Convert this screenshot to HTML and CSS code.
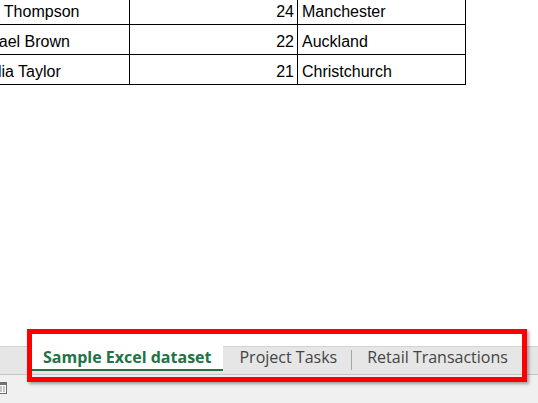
FILE: index.html
```html
<!DOCTYPE html>
<html lang="en">
<head>
    <meta charset="UTF-8">
    <meta name="viewport" content="width=device-width, initial-scale=1.0">
    <title>Sample Excel dataset</title>
    <link rel="stylesheet" href="styles.css">
</head>
<body>
    <div class="sheet">
        <div class="grid">
            <div class="row">
                <div class="cell name">Liam Thompson</div>
                <div class="cell num">24</div>
                <div class="cell">Manchester</div>
            </div>
            <div class="row">
                <div class="cell name">Michael Brown</div>
                <div class="cell num">22</div>
                <div class="cell">Auckland</div>
            </div>
            <div class="row">
                <div class="cell name">Amelia Taylor</div>
                <div class="cell num">21</div>
                <div class="cell">Christchurch</div>
            </div>
        </div>
    </div>

    <div class="tabbar">
        <div class="tab active">Sample Excel dataset</div>
        <div class="tab first">Project Tasks</div>
        <span class="sep"></span>
        <div class="tab">Retail Transactions</div>
    </div>

    <div class="statusbar">
        <svg class="view-icon" width="12" height="12" viewBox="0 0 12 12">
            <rect x="0.5" y="0.5" width="11" height="11" fill="#fff" stroke="#6f6f6f"/>
            <rect x="1" y="1" width="10" height="2" fill="#6f6f6f"/>
            <path d="M2 5h8M2 7h8M2 9h8" stroke="#8a8a8a" stroke-dasharray="2 1"/>
        </svg>
    </div>

    <div class="highlight"></div>
</body>
</html>
```

FILE: styles.css
```css
body {
    margin: 0;
    width: 538px;
    height: 403px;
    overflow: hidden;
    display: flex;
    flex-direction: column;
    background: #fff;
    position: relative;
}

.sheet {
    flex: 1;
    overflow: hidden;
    background: #fff;
}

.grid {
    width: 505px;
    margin-top: -5px;
    margin-left: -39px;
    font-family: "Liberation Sans", Arial, sans-serif;
    font-size: 16px;
    color: #000;
}

.row {
    display: grid;
    grid-template-columns: 169px 168px 168px;
    height: 30px;
    box-sizing: border-box;
    border-bottom: 1px solid #000;
}

.cell {
    box-sizing: border-box;
    border-right: 1px solid #000;
    display: flex;
    align-items: flex-end;
    line-height: 20px;
    padding: 0 3px 2px 4px;
    white-space: nowrap;
    overflow: hidden;
}

.cell.num {
    justify-content: flex-end;
}

.tabbar {
    height: 29px;
    box-sizing: border-box;
    background: #e6e6e6;
    border-top: 1px solid #d2d2d2;
    border-bottom: 1px solid #c6c6c6;
    display: flex;
    align-items: flex-start;
    padding-left: 31px;
    font-family: "Open Sans", "Noto Sans", sans-serif;
    font-size: 16px;
    color: #444;
}

.tab {
    line-height: 20px;
    padding: 0 15px;
    white-space: nowrap;
}

.tab.first {
    padding: 0 14px 0 16px;
}

.tab.active {
    margin-top: -1px;
    padding: 1px 12px 2px;
    background: #fff;
    border-bottom: 2px solid #217346;
    color: #217346;
    font-weight: bold;
}

.sep {
    width: 1px;
    height: 20px;
    margin-top: 3px;
    background: #a6a6a6;
}

.statusbar {
    height: 28px;
    background: #f0f0f0;
    display: flex;
    align-items: flex-start;
}

.view-icon {
    margin: 7px 0 0 -5px;
}

.highlight {
    position: absolute;
    left: 27px;
    top: 329px;
    width: 500px;
    height: 53px;
    box-sizing: border-box;
    border: 5px solid #ff0000;
    box-shadow: 2px 2px 3px rgba(0, 0, 0, 0.35);
}
```
